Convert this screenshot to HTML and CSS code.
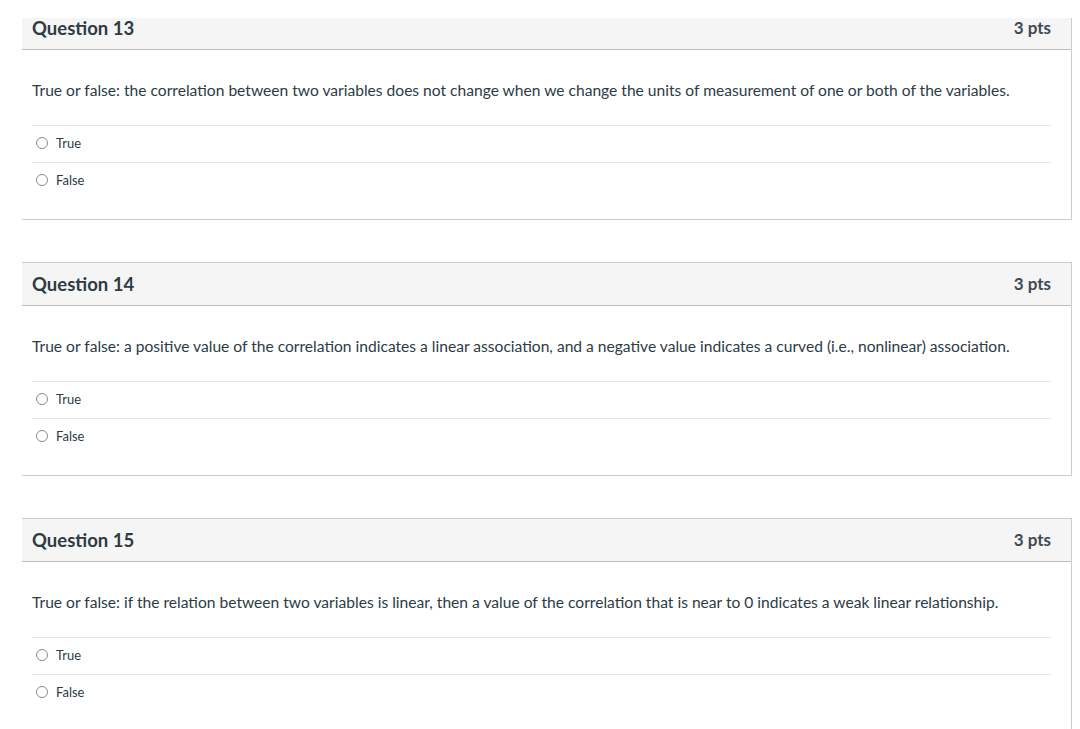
FILE: index.html
```html
<!DOCTYPE html>
<html lang="en">
<head>
<meta charset="utf-8">
<title>Quiz</title>
<link rel="stylesheet" href="styles.css">
</head>
<body>
<div class="quiz">
  <section class="card card-cut">
    <header class="card-head">
      <h2 class="q-title">Question 13</h2>
      <span class="q-pts">3 pts</span>
    </header>
    <div class="card-body">
      <p class="q-text">True or false: the correlation between two variables does not change when we change the units of measurement of one or both of the variables.</p>
      <div class="options">
        <label class="option"><span class="radio"></span><span class="opt-label">True</span></label>
        <label class="option"><span class="radio"></span><span class="opt-label">False</span></label>
      </div>
    </div>
  </section>
  <section class="card">
    <header class="card-head">
      <h2 class="q-title">Question 14</h2>
      <span class="q-pts">3 pts</span>
    </header>
    <div class="card-body">
      <p class="q-text">True or false: a positive value of the correlation indicates a linear association, and a negative value indicates a curved (i.e., nonlinear) association.</p>
      <div class="options">
        <label class="option"><span class="radio"></span><span class="opt-label">True</span></label>
        <label class="option"><span class="radio"></span><span class="opt-label">False</span></label>
      </div>
    </div>
  </section>
  <section class="card">
    <header class="card-head">
      <h2 class="q-title">Question 15</h2>
      <span class="q-pts">3 pts</span>
    </header>
    <div class="card-body">
      <p class="q-text">True or false: if the relation between two variables is linear, then a value of the correlation that is near to 0 indicates a weak linear relationship.</p>
      <div class="options">
        <label class="option"><span class="radio"></span><span class="opt-label">True</span></label>
        <label class="option"><span class="radio"></span><span class="opt-label">False</span></label>
      </div>
    </div>
  </section>
</div>
</body>
</html>
```
FILE: styles.css
```css
html, body {
  margin: 0;
  padding: 0;
  background: #ffffff;
}
body {
  font-family: Lato, "Open Sans", "Liberation Sans", sans-serif;
  color: #2d3b45;
  overflow: hidden;
}
.quiz {
  padding: 18px 0 0 22px;
  display: flex;
  flex-direction: column;
  gap: 42px;
  width: 1050px;
}
.card {
  border: 1px solid #c7cdd1;
  border-left: none;
  background: #fff;
}
.card-cut {
  border-top: none;
}
.card-head {
  display: flex;
  justify-content: space-between;
  align-items: center;
  height: 20px;
  padding: 11px 20px 11px 10px;
  background: #f5f5f5;
  border-bottom: 1px solid #b9bec2;
}
.card-cut .card-head {
  padding-top: 0;
}
.q-title {
  margin: 0;
  font-size: 18.5px;
  font-weight: 700;
  line-height: 20px;
  color: #2d3b45;
}
.q-pts {
  font-size: 17px;
  font-weight: 700;
  line-height: 20px;
  color: #3d4a53;
}
.card-body {
  padding: 30px 20px 20px 10px;
}
.q-text {
  margin: 0 0 25px;
  font-size: 15.6px;
  line-height: 20px;
  color: #2d3b45;
}
.options {
  display: flex;
  flex-direction: column;
}
.option {
  box-sizing: border-box;
  display: flex;
  align-items: center;
  gap: 8px;
  height: 37px;
  padding: 0 0 2px 4px;
  border-top: 1px solid #e3e6e8;
}
.radio {
  width: 12px;
  height: 12px;
  border: 1px solid #868b8f;
  border-radius: 50%;
  box-sizing: border-box;
  flex: none;
}
.opt-label {
  font-size: 13px;
  color: #2d3b45;
}
```
